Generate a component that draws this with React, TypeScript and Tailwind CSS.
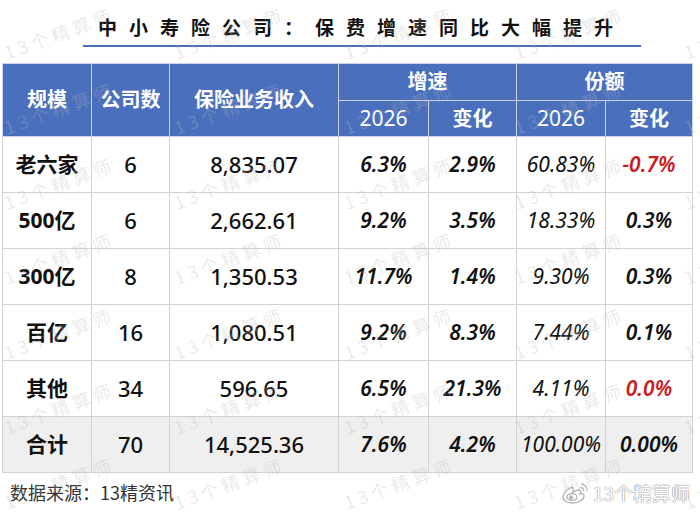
import React from "react";

type Row = {
  label: string;
  count: string;
  income: string;
  growth: string;
  growthChange: string;
  share: string;
  shareChange: string;
  red?: boolean;
  total?: boolean;
};

const rows: Row[] = [
  { label: "老六家", count: "6", income: "8,835.07", growth: "6.3%", growthChange: "2.9%", share: "60.83%", shareChange: "-0.7%", red: true },
  { label: "500亿", count: "6", income: "2,662.61", growth: "9.2%", growthChange: "3.5%", share: "18.33%", shareChange: "0.3%" },
  { label: "300亿", count: "8", income: "1,350.53", growth: "11.7%", growthChange: "1.4%", share: "9.30%", shareChange: "0.3%" },
  { label: "百亿", count: "16", income: "1,080.51", growth: "9.2%", growthChange: "8.3%", share: "7.44%", shareChange: "0.1%" },
  { label: "其他", count: "34", income: "596.65", growth: "6.5%", growthChange: "21.3%", share: "4.11%", shareChange: "0.0%", red: true },
  { label: "合计", count: "70", income: "14,525.36", growth: "7.6%", growthChange: "4.2%", share: "100.00%", shareChange: "0.00%", total: true },
];

const font = "font-['Noto_Sans','Noto_Sans_CJK_SC',sans-serif]";

function Watermarks() {
  const marks: { x: number; y: number }[] = [];
  for (let r = 0; r < 7; r++) {
    for (let c = 0; c < 5; c++) {
      marks.push({ x: 8 + c * 170, y: 62 + r * 75 });
    }
  }
  return (
    <div className="pointer-events-none absolute inset-0 overflow-hidden">
      {marks.map((m, i) => (
        <span
          key={i}
          className="absolute origin-bottom-left -rotate-[20deg] whitespace-nowrap text-[18px] leading-[20px] tracking-[4px] text-[rgba(185,185,185,0.3)] font-['Noto_Sans_CJK_SC',sans-serif]"
          style={{ left: m.x, top: m.y - 20 }}
        >
          13个精算师
        </span>
      ))}
    </div>
  );
}

function WeiboMark() {
  return (
    <div className="pointer-events-none absolute bottom-[8px] right-[10px] flex items-center gap-[2px]">
      <svg width="30" height="24" viewBox="0 0 30 24" fill="none" stroke="#b5b5b5" strokeWidth="1.4">
        <path d="M12 6c-5 1-10 6-10 10 0 4 5 6 10 6s11-3 11-7c0-2-2-3-4-2 1-2 1-4-1-4-2 0-4 1-6 2 1-3-1-5 0-5z" fill="#fff" />
        <ellipse cx="11" cy="16" rx="5" ry="3.5" />
        <circle cx="10" cy="16.5" r="1.5" fill="#b5b5b5" />
        <path d="M20 3a6 6 0 0 1 6 7" />
        <path d="M19 6.5a3 3 0 0 1 3.5 3.5" />
      </svg>
      <span className="text-[19px] leading-[24px] text-white font-['Noto_Sans_CJK_SC',sans-serif] [text-shadow:0_0_1px_#9a9a9a,0_0_1px_#9a9a9a,0_0_1px_#9a9a9a]">
        13个精算师
      </span>
    </div>
  );
}

export default function App() {
  const head = "border border-[#c9d3ec] text-white font-bold text-[20px] text-center align-middle";
  const cell = "border border-[#d2d2d2] text-center align-middle text-[21px] text-[#111]";

  return (
    <div className={`relative h-[513px] w-[700px] overflow-hidden bg-white ${font}`}>
      <div className="pl-[98px] pt-[13px] text-[19px] font-bold leading-[28px] tracking-[12px] text-[#111] font-['Noto_Sans_CJK_SC',sans-serif]">
        中小寿险公司：保费增速同比大幅提升
      </div>
      <div className="ml-[83px] mt-[4px] h-[2px] w-[558px] bg-[#4a6fbd]" />

      <table className="ml-[2px] mt-[16px] w-[690px] table-fixed border-collapse">
        <colgroup>
          <col className="w-[89px]" />
          <col className="w-[78px]" />
          <col className="w-[169px]" />
          <col className="w-[90px]" />
          <col className="w-[88px]" />
          <col className="w-[89px]" />
          <col className="w-[87px]" />
        </colgroup>
        <thead className="bg-[#4a6fbd]">
          <tr className="h-[37px]">
            <th rowSpan={2} className={head}>规模</th>
            <th rowSpan={2} className={head}>公司数</th>
            <th rowSpan={2} className={head}>保险业务收入</th>
            <th colSpan={2} className={head}>增速</th>
            <th colSpan={2} className={head}>份额</th>
          </tr>
          <tr className="h-[36px]">
            <th className={`${head} font-normal text-[21px]`}>2026</th>
            <th className={head}>变化</th>
            <th className={`${head} font-normal text-[21px]`}>2026</th>
            <th className={head}>变化</th>
          </tr>
        </thead>
        <tbody>
          {rows.map((r) => (
            <tr key={r.label} className={`h-[56px] ${r.total ? "bg-[#efefef]" : ""}`}>
              <td className={`${cell} font-bold`}>{r.label}</td>
              <td className={`${cell} font-medium text-[22px]`}>{r.count}</td>
              <td className={`${cell} font-medium text-[22px]`}>{r.income}</td>
              <td className={`${cell} italic font-semibold`}>{r.growth}</td>
              <td className={`${cell} italic font-semibold`}>{r.growthChange}</td>
              <td className={`${cell} italic font-normal`}>{r.share}</td>
              <td className={`${cell} italic font-semibold ${r.red ? "text-[#c8201f]" : ""}`}>{r.shareChange}</td>
            </tr>
          ))}
        </tbody>
      </table>

      <div className="mt-[6px] pl-[10px] text-[18px] leading-[26px] text-[#333] font-['Noto_Sans_CJK_SC',sans-serif]">
        数据来源：13精资讯
      </div>

      <Watermarks />
      <WeiboMark />
    </div>
  );
}
